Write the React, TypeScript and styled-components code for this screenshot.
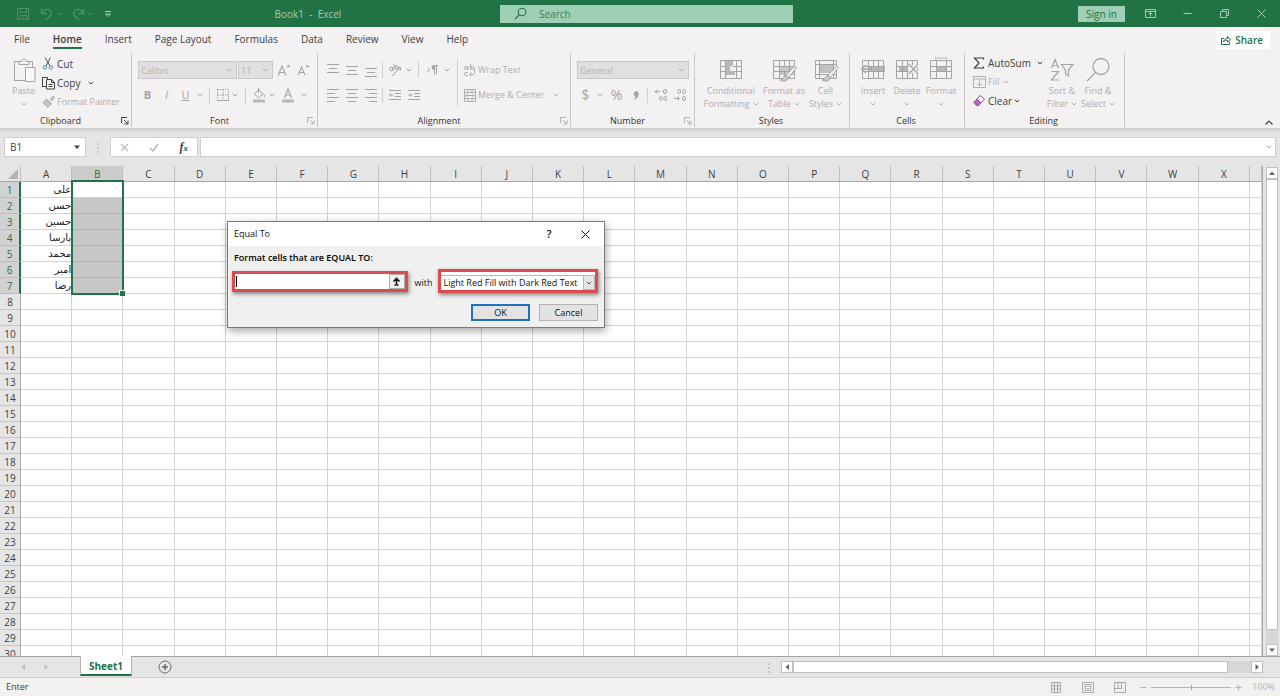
import React from "react";
import styled, { createGlobalStyle, css } from "styled-components";

const c = {
  green: "#217346",
  mint: "#9fcfb5",
  ribbon: "#f4f1f2",
  chrome: "#e6e5e6",
  line: "#d4d0d5",
  off: "#b0adae",
  iconOff: "#a6a3a5",
  ink: "#403e3f",
};

const Global = createGlobalStyle`
  * { box-sizing: border-box; }
  html, body { margin: 0; }
  body { font-family: "Open Sans", "Noto Sans", sans-serif; font-size: 9px; color: ${c.ink}; overflow: hidden; }
  button, input, select { font: inherit; color: inherit; margin: 0; }
  button { background: none; border: 0; padding: 0; }
  svg { display: block; flex: none; }
`;

/* ---------- shell ---------- */
const Window = styled.div`
  display: flex;
  flex-direction: column;
  height: 100vh;
  background: ${c.chrome};
`;

const TitleBar = styled.header`
  display: grid;
  grid-template-columns: 500fr 293fr 487fr;
  align-items: center;
  flex: none;
  height: 27px;
  background: ${c.green};
  color: ${c.mint};
`;
const TitleLeft = styled.div`
  display: flex;
  align-items: center;
  padding: 0 4px 0 16px;
`;
const QuickAccess = styled.div`
  display: flex;
  align-items: center;
  width: 104px;
`;
const QuickButton = styled.button<{ $w: number; $on?: boolean }>`
  display: flex;
  width: ${(p) => p.$w}px;
  color: ${(p) => (p.$on ? c.mint : "#4b9069")};
`;
const DocTitle = styled.div`
  flex: 1;
  text-align: center;
  font-size: 10px;
  line-height: 14px;
`;
const SearchBox = styled.label`
  display: flex;
  align-items: center;
  gap: 12px;
  height: 18px;
  padding-left: 14px;
  background: ${c.mint};
  color: ${c.green};
`;
const SearchInput = styled.input`
  flex: 1;
  min-width: 0;
  border: 0;
  padding: 0;
  outline: 0;
  background: transparent;
  font-size: 10px;
  &::placeholder { color: ${c.green}; opacity: 0.85; }
`;
const TitleRight = styled.div`
  display: flex;
  align-items: center;
  justify-content: flex-end;
  padding-right: 12px;
`;
const SignIn = styled.button`
  width: 47px;
  height: 16px;
  margin-right: 19px;
  background: ${c.mint};
  color: ${c.green};
  font-size: 10px;
  line-height: 16px;
`;
const WindowButton = styled.button<{ $gap?: number }>`
  display: flex;
  justify-content: center;
  width: 13px;
  margin-left: ${(p) => p.$gap ?? 0}px;
  color: ${c.mint};
`;

/* ---------- tabs ---------- */
const TabRow = styled.nav`
  display: flex;
  align-items: flex-start;
  flex: none;
  height: 26px;
  padding: 4px 10px 0 14px;
  gap: 23px;
  background: ${c.ribbon};
`;
const Tab = styled.a<{ $active?: boolean }>`
  height: 18px;
  color: ${c.ink};
  text-decoration: none;
  font-size: 10px;
  line-height: 17px;
  font-weight: ${(p) => (p.$active ? 600 : 400)};
  border-bottom: 2px solid ${(p) => (p.$active ? c.green : "transparent")};
`;
const ShareButton = styled.button`
  display: flex;
  align-items: center;
  gap: 4px;
  height: 18px;
  margin-left: auto;
  padding: 0 7px 0 5px;
  background: #fff;
  color: ${c.green};
  font-size: 10px;
  font-weight: 600;
`;

/* ---------- ribbon ---------- */
const Ribbon = styled.div`
  display: flex;
  flex: none;
  height: 75px;
  background: ${c.ribbon};
`;
const GroupBox = styled.section<{ $w: number }>`
  display: flex;
  flex-direction: column;
  flex: none;
  width: ${(p) => p.$w}px;
  height: 74px;
  border-right: 1px solid #c9c6c8;
`;
const GroupBody = styled.div<{ $pad: number }>`
  display: flex;
  flex: 1;
  padding-left: ${(p) => p.$pad}px;
`;
const GroupFooter = styled.div`
  display: flex;
  align-items: center;
  height: 12px;
  padding-right: 2px;
`;
const GroupName = styled.span`
  flex: 1;
  text-align: center;
  font-weight: 500;
  line-height: 12px;
  color: #333;
`;
const Launcher = styled.button<{ $on?: boolean }>`
  color: ${(p) => (p.$on ? c.ink : c.off)};
`;
const Stack = styled.div<{ $top?: number; $gap?: number }>`
  display: flex;
  flex-direction: column;
  gap: ${(p) => p.$gap ?? 0}px;
  padding-top: ${(p) => p.$top ?? 0}px;
`;
const Line = styled.div<{ $h: number }>`
  display: flex;
  align-items: center;
  height: ${(p) => p.$h}px;
`;
const Command = styled.button<{ $off?: boolean; $icon?: number; $h?: number }>`
  display: grid;
  grid-template-columns: ${(p) => p.$icon ?? 15}px auto auto;
  align-items: center;
  justify-content: start;
  height: ${(p) => p.$h ?? 19}px;
  font-size: ${(p) => (p.$off ? 9 : 10)}px;
  line-height: 14px;
  text-align: left;
  white-space: nowrap;
  color: ${(p) => (p.$off ? c.off : c.ink)};
`;
const ChevronSlot = styled.span<{ $gap: number }>`
  margin-left: ${(p) => p.$gap}px;
`;
const BigButton = styled.button<{ $w: number }>`
  display: flex;
  flex-direction: column;
  align-items: center;
  flex: none;
  width: ${(p) => p.$w}px;
  padding-top: 3px;
  color: ${c.off};
  line-height: 13px;
  white-space: nowrap;
`;
const BigIcon = styled.span`
  display: flex;
  align-items: center;
  justify-content: center;
  height: 27px;
  margin-bottom: 1px;
  color: ${c.iconOff};
`;
const BigLine = styled.span`
  display: flex;
  align-items: center;
  gap: 3px;
  height: 13px;
`;
const Tool = styled.button<{ $w: number }>`
  display: flex;
  align-items: center;
  justify-content: center;
  flex: none;
  width: ${(p) => p.$w}px;
  height: 18px;
  color: ${c.iconOff};
`;
const Rule = styled.span<{ $h?: number; $m?: number }>`
  flex: none;
  width: 1px;
  height: ${(p) => p.$h ?? 16}px;
  margin: 0 ${(p) => p.$m ?? 5}px;
  background: #cfcccd;
`;
const ComboWrap = styled.span<{ $w: number }>`
  display: grid;
  grid-template-columns: 1fr 10px;
  align-items: center;
  width: ${(p) => p.$w}px;
  height: 18px;
  margin-right: 1px;
  border: 1px solid #cbc8c9;
  background: #e1dfe0;
  color: ${c.off};
`;
const ComboSelect = styled.select`
  appearance: none;
  min-width: 0;
  height: 16px;
  padding: 0 0 0 2px;
  border: 0;
  background: transparent;
  opacity: 1;
  color: #b5b2b3;
`;
const Collapse = styled.button`
  display: flex;
  align-self: flex-end;
  margin: 0 7px 3px auto;
  color: ${c.ink};
`;

/* ---------- formula bar ---------- */
const FormulaBar = styled.div`
  display: flex;
  align-items: center;
  flex: none;
  height: 38px;
  padding: 0 4px 0 4px;
  background: linear-gradient(#cfcdce 0, #dedcdd 3px, ${c.chrome} 7px);
`;
const NameBox = styled.label`
  display: flex;
  align-items: center;
  width: 82px;
  height: 20px;
  padding: 0 5px;
  border: 1px solid #d0ced0;
  background: #fff;
  font-size: 10px;
`;
const NameInput = styled.input`
  flex: 1;
  min-width: 0;
  padding: 0;
  border: 0;
  outline: 0;
`;
const Dots = styled.span`
  width: 24px;
  display: flex;
  justify-content: center;
  color: #a8a6a7;
`;
const FxBox = styled.div`
  display: flex;
  align-items: center;
  justify-content: space-between;
  width: 88px;
  height: 20px;
  margin-right: 2px;
  padding: 0 9px;
  border: 1px solid #d0ced0;
  background: #fff;
`;
const FxButton = styled.button`
  color: #bab8b9;
`;
const FxText = styled.button`
  font-family: "Liberation Serif", serif;
  font-style: italic;
  font-weight: 700;
  font-size: 12px;
  line-height: 14px;
`;
const Sub = styled.span`
  font-size: 9px;
`;
const FormulaField = styled.label`
  display: flex;
  align-items: center;
  flex: 1;
  height: 20px;
  padding-right: 3px;
  border: 1px solid #d0ced0;
  background: #fff;
  color: #aaa;
`;

/* ---------- grid ---------- */
const SheetArea = styled.div`
  display: flex;
  flex: 1;
  min-height: 0;
`;
const SheetView = styled.div`
  flex: 1;
  min-width: 0;
  overflow: hidden;
  border-right: 1px solid #a9a6a8;
`;
const Grid = styled.table`
  width: 100%;
  table-layout: fixed;
  border-collapse: separate;
  border-spacing: 0;
  background: #fff;
`;
const headFont = css`
  font-weight: 400;
  font-size: 10px;
  line-height: 14px;
  text-align: center;
`;
const ColHead = styled.th<{ $sel?: boolean }>`
  ${headFont}
  height: 16px;
  padding: 0;
  border-right: 1px solid #bfbdbe;
  border-bottom: 1px solid ${(p) => (p.$sel ? c.green : "#a9a7a8")};
  background: ${(p) => (p.$sel ? "#cbcbcb" : c.chrome)};
  color: ${(p) => (p.$sel ? c.green : c.ink)};
`;
const CornerHead = styled.th`
  padding: 0 2px 2px 0;
  border-right: 1px solid #bfbdbe;
  border-bottom: 1px solid #a9a7a8;
  background: ${c.chrome};
  vertical-align: bottom;
  & > svg { margin-left: auto; }
`;
const RowHead = styled.th<{ $sel?: boolean }>`
  ${headFont}
  height: 16px;
  padding: 1px 0 0;
  border-right: ${(p) => (p.$sel ? `2px solid ${c.green}` : "1px solid #a9a7a8")};
  border-bottom: 1px solid ${(p) => (p.$sel ? "#bdbbbc" : "#c9c7c8")};
  background: ${(p) => (p.$sel ? "#d3d2d3" : c.chrome)};
  color: ${(p) => (p.$sel ? c.green : c.ink)};
`;
const Cell = styled.td<{ $shade?: boolean }>`
  position: relative;
  height: 16px;
  padding: 1px 1px 0 0;
  border-right: 1px solid ${c.line};
  border-bottom: 1px solid ${(p) => (p.$shade ? "#b0b2b1" : c.line)};
  background: ${(p) => (p.$shade ? "#c6c8c7" : "#fff")};
  font-family: "DejaVu Sans", sans-serif;
  font-size: 10px;
  line-height: 14px;
  text-align: right;
  white-space: nowrap;
  color: #222;
`;
const Selection = styled.div`
  position: absolute;
  z-index: 1;
  left: -1px;
  right: -2px;
  top: -2px;
  height: 115px;
  border: 2px solid ${c.green};
  &::after {
    content: "";
    position: absolute;
    right: -3px;
    bottom: -3px;
    width: 5px;
    height: 5px;
    border: solid #fff;
    border-width: 1px 0 0 1px;
    background: ${c.green};
  }
`;

const VScroll = styled.div`
  display: flex;
  flex-direction: column;
  width: 17px;
  padding: 1px 2px 0 3px;
`;
const scrollPart = css`
  display: flex;
  align-items: center;
  justify-content: center;
  border: 1px solid #c0bebf;
  background: #fff;
  color: #666;
`;
const VButton = styled.button`
  ${scrollPart}
  height: 12px;
`;
const VTrack = styled.div`
  flex: 1;
  background: #d8d7d8;
`;
const VThumb = styled.div`
  height: 97%;
  border: 1px solid #c0bebf;
  background: #fff;
`;

/* ---------- sheet tabs and status ---------- */
const SheetBar = styled.div`
  display: flex;
  flex: none;
  height: 22px;
  border-top: 1px solid #a3a1a2;
  border-bottom: 1px solid #d0ced0;
`;
const SheetNav = styled.div`
  display: flex;
  align-items: center;
  gap: 17px;
  width: 80px;
  padding-left: 20px;
  color: #bfbdbf;
`;
const SheetTab = styled.a`
  width: 52px;
  height: 20px;
  margin-top: -1px;
  border: 1px solid #b5b3b4;
  border-width: 0 1px;
  border-bottom: 2px solid ${c.green};
  background: #fff;
  color: ${c.green};
  font-size: 10px;
  font-weight: 700;
  line-height: 20px;
  text-align: center;
  text-decoration: none;
`;
const AddSheet = styled.button`
  margin-left: 26px;
  color: #6d6b6c;
`;
const HScroll = styled.div`
  display: flex;
  align-items: center;
  flex: 0 0 523px;
  margin-left: auto;
  padding-right: 17px;
  color: #a8a6a7;
`;
const HButton = styled.button`
  ${scrollPart}
  width: 12px;
  height: 12px;
`;
const HTrack = styled.div`
  flex: 1;
  height: 12px;
  background: #d8d7d8;
`;
const HThumb = styled.div`
  width: 95%;
  height: 12px;
  border: 1px solid #c0bebf;
  background: #fff;
`;
const StatusBar = styled.footer`
  display: flex;
  align-items: center;
  flex: none;
  height: 18px;
  padding: 0 5px 0 6px;
  background: #f2f1f0;
  line-height: 14px;
`;
const ViewButtons = styled.div`
  display: flex;
  gap: 20px;
  margin-left: auto;
  color: #a9a7a8;
`;
const ZoomBox = styled.div`
  display: flex;
  align-items: center;
  gap: 4px;
  margin-left: 14px;
  color: #b3b1b2;
`;
const ZoomRange = styled.input`
  appearance: none;
  width: 80px;
  height: 8px;
  background: linear-gradient(#b9b7b8, #b9b7b8) center / 100% 1px no-repeat;
  &::-webkit-slider-thumb {
    appearance: none;
    width: 1px;
    height: 5px;
    background: #a5a3a4;
  }
`;
const ZoomText = styled.span`
  margin-left: 6px;
`;

/* ---------- dialog ---------- */
const Dialog = styled.section`
  position: absolute;
  z-index: 5;
  left: 227px;
  top: 221px;
  width: 378px;
  border: 1px solid #7c7a7b;
  background: #f0f0f0;
  box-shadow: 1px 3px 8px rgba(0, 0, 0, 0.35);
  color: #111;
`;
const DialogTitle = styled.header`
  display: flex;
  align-items: center;
  height: 24px;
  padding: 0 14px 0 6px;
  background: #fff;
  line-height: 14px;
`;
const DialogName = styled.span`
  flex: 1;
`;
const HelpButton = styled.button`
  width: 12px;
  margin-right: 26px;
  font-size: 11px;
  font-weight: 600;
`;
const DialogBody = styled.form`
  padding: 5px 6px 6px 4px;
`;
const Prompt = styled.label`
  display: block;
  padding-left: 2px;
  font-weight: 600;
  line-height: 14px;
  color: #000;
`;
const Fields = styled.div`
  display: flex;
  align-items: center;
  margin-top: 4px;
`;
const marked = css`
  display: flex;
  border: 3px solid #dd4a50;
  box-shadow: 1px 2px 4px rgba(0, 0, 0, 0.45);
`;
const RefBox = styled.span`
  ${marked}
  position: relative;
  width: 176px;
  height: 21px;
`;
const RefInput = styled.input`
  flex: 1;
  min-width: 0;
  padding: 0 4px;
  border: 0;
  outline: 0;
  background: #fff;
`;
const Caret = styled.i`
  position: absolute;
  left: 1px;
  top: 2px;
  width: 1px;
  height: 11px;
  background: #000;
`;
const PickButton = styled.button`
  display: flex;
  align-items: center;
  justify-content: center;
  width: 16px;
  border: 1px solid #b0aeaf;
  background: #f0f0f0;
`;
const WithText = styled.label`
  width: 31px;
  padding: 3px 0 0 1px;
  text-align: center;
  line-height: 14px;
`;
const SelectBox = styled.span`
  ${marked}
  width: 160px;
  height: 24px;
  align-items: stretch;
  background: #fff;
  padding: 3px 0 0;
`;
const StyleSelect = styled.select`
  appearance: none;
  flex: 1;
  min-width: 0;
  padding: 0 0 2px 2px;
  border: 0;
  border-top: 1px solid #b9b7b8;
  background: #fff;
  white-space: nowrap;
`;
const SelectArrow = styled.span`
  display: flex;
  align-items: center;
  justify-content: center;
  width: 12px;
  border: 1px solid #b9b7b8;
  background: #e5e5e5;
  color: #555;
`;
const Actions = styled.div`
  display: flex;
  justify-content: flex-end;
  gap: 9px;
  margin-top: 11px;
`;
const ActionButton = styled.button<{ $primary?: boolean }>`
  width: 59px;
  height: 17px;
  border: ${(p) => (p.$primary ? "2px solid #1f73bd" : "1px solid #b3b1b2")};
  background: #e2e2e2;
  line-height: 13px;
`;

/* ---------- icons ---------- */
type IcoProps = { w: number; h: number; sw?: number; children: React.ReactNode };
const Ico = ({ w, h, sw = 1, children }: IcoProps) => (
  <svg width={w} height={h} viewBox={`0 0 ${w} ${h}`} fill="none" stroke="currentColor" strokeWidth={sw} aria-hidden="true">
    {children}
  </svg>
);
const Chev = () => (
  <Ico w={6} h={4}><path d="M.7 .8 3 3 5.300 .8" /></Ico>
);
const Tri = ({ d }: { d: "up" | "down" | "left" | "right" }) => {
  const paths = { up: "M0 5 3 1.500 6 5z", down: "M0 1.500 3 5 6 1.500z", left: "M5 0 1.500 3 5 6z", right: "M1.500 0 5 3 1.500 6z" };
  return <svg width="6" height="6" viewBox="0 0 6 6" fill="currentColor" aria-hidden="true"><path d={paths[d]} /></svg>;
};
const Lines = ({ rows }: { rows: [number, number, number][] }) => (
  <Ico w={14} h={14}>{rows.map(([y, a, b]) => <path key={y} d={`M${a} ${y}.5H${b}`} />)}</Ico>
);
const LauncherIcon = () => (
  <Ico w={8} h={8}><path d="M.5 6V.5H6M3 3l3.500 3.500M7 3.500V7H3.500" /></Ico>
);
const TableIcon = ({ kind }: { kind: "cond" | "table" | "cell" | "insert" | "delete" | "format" }) => (
  <Ico w={26} h={26}>
    {kind === "cond" && <path d="M7 4h8v5H7zM7 9h5v5H7zM7 14h10v4H7z" fill="#b9b6b8" stroke="none" />}
    {kind === "table" && <path d="M9 9h14v9H9z" fill="#c9c6c8" stroke="none" />}
    {kind === "cell" && <path d="M6 8h14v8H6z" fill="#c3c0c2" stroke="none" />}
    {kind === "insert" && <path d="M8 9h17v6H8z" fill="#b8b5b7" stroke="none" />}
    {kind === "delete" && <path d="M5 9h9v6H5z" fill="#b8b5b7" stroke="none" />}
    {kind === "format" && <path d="M8 9h10v6H8z" fill="#b8b5b7" stroke="none" />}
    {kind === "cond" && <path d="M2.500 3.500h21v18h-21zM2.500 9.500h4.500M2.500 14.500h4.500M15 9.500h8.500M17 14.500h6.500M7.500 3.500v18M18.500 3.500v18" />}
    {kind === "cell" && <path d="M2.500 3.500h21v18h-21zM2.500 7.500h21M2.500 17.500h21M6.500 3.500v18M20.500 3.500v18" />}
    {kind !== "cell" && kind !== "cond" && <path d="M2.500 3.500h21v18h-21zM2.500 9.500h21M2.500 14.500h21M8.500 3.500v18M18.500 3.500v18" />}
    {(kind === "table" || kind === "insert" || kind === "delete") && <path d="M13.500 3.500v6M13.500 14.500v7" />}
    {(kind === "table" || kind === "cell") && (
      <>
        <path d="M23.500 9 25.500 10.500l-8 10-2.500-2z" fill={c.ribbon} />
        <path d="M15 18.500c-3 0-2.500 4-6 4.500 3 2 8 1.500 8.500-2.500z" fill="#c9c6c8" />
      </>
    )}
    {kind === "insert" && (
      <>
        <path d="M1 10h7v4H1z" fill={c.ribbon} stroke="none" />
        <path d="M12 12H1.500M6 8l-4.500 4L6 16" strokeWidth="1.300" />
      </>
    )}
    {kind === "delete" && (
      <>
        <path d="m15 7 9 10M24 7l-9 10" strokeWidth="3.500" stroke={c.ribbon} />
        <path d="m15 7 9 10M24 7l-9 10" strokeWidth="1.300" />
      </>
    )}
    {kind === "format" && <path d="M7.500 1h11M7.500 0v2.500M18.500 0v2.500" stroke="#bbb8ba" />}
  </Ico>
);

const Icon = {
  save: <Ico w={14} h={14}><path d="M1.500 1.500h11v11h-11zM4 1.500v4h6.500v-4M4 12.500v-4h6.500v4M6 10.500h2" /></Ico>,
  undo: <Ico w={14} h={14} sw={1.3}><path d="M1.500 1.500v5h5M2 6c2-3.500 6-4.500 8-2.500s2 4-.5 6L6 13" /></Ico>,
  redo: <Ico w={14} h={14} sw={1.3}><path d="M12.500 1.500v5h-5M12 6c-2-3.500-6-4.500-8-2.500s-2 4 .5 6L8 13" /></Ico>,
  custom: <Ico w={8} h={8}><path d="M1 1.500h6M1.500 4 4 6.500 6.500 4z" /></Ico>,
  search: <Ico w={13} h={13} sw={1.100}><circle cx="8" cy="5" r="3.800" /><path d="M5.300 7.700 1 12" /></Ico>,
  ribbonOpts: <Ico w={11} h={9}><path d="M.5.5h10v8H.5zM.5 2.500h10M5.500 7.500v-4M3.500 5.500l2-2 2 2" /></Ico>,
  min: <Ico w={9} h={9}><path d="M.5 4.500h8" /></Ico>,
  restore: <Ico w={9} h={9}><path d="M.5 2.500h6v6h-6zM2.500 2.500v-2h6v6h-2" /></Ico>,
  close: <Ico w={9} h={9}><path d="m.5.5 8 8M8.500.5l-8 8" /></Ico>,
  share: <Ico w={10} h={10}><path d="M3 3.500H.5v6h8V7M2.500 7c.5-2.500 2-3.500 4-3.500V1.500L9.500 4.500l-3 2.500V5.300C5 5.300 3.500 5.500 2.500 7z" /></Ico>,
  paste: <Ico w={24} h={26}><path d="M7 4.500H2.500v19H13M17 4.500h3.500v6" /><path d="M7 7.500v-3h2.500c0-3 5-3 5 0H17v3z" /><path d="M13.500 10.500h9.500v14h-9.500z" fill="#faf8f9" /></Ico>,
  cut: <Ico w={12} h={13}><path d="M3 .5 8 9M8.500.5 4 9" stroke="#555" /><circle cx="3" cy="10.500" r="1.700" stroke="#3d8bc4" /><circle cx="8.800" cy="10.500" r="1.700" stroke="#3d8bc4" /></Ico>,
  copy: <Ico w={14} h={14}><path d="M4 10.500H.5v-9h5v2" /><path d="M4.500 3.500h5l3 3v6.500h-8zM9.500 3.500v3h3M6.500 8.500h4M6.500 10.500h4" /></Ico>,
  painter: <Ico w={13} h={13}><path d="M8.500 4.500 11 1l1.500 1.500-3 3.500zM3.500 4l6 5.500M2 6.500 .8 7.500l5 5 3.500-4-4.500-4z" fill="#c6c3c5" /></Ico>,
  borders: <Ico w={14} h={14}><path d="M1.500 1.500h11v11h-11zM7 1.500v11M1.500 7h11" strokeDasharray="1.500 1" /><path d="M1 12.500h12" /></Ico>,
  fill: <Ico w={14} h={15}><path d="m6.500 1.500 4.500 4.500-4.500 4-4-4zM6.500 0v5M11.500 6c1.500 2 1 3 .5 3.500" /><path d="M1 13h12" strokeWidth="3" stroke="#b9b6b8" /></Ico>,
  fontColor: <Ico w={14} h={15}><path d="M3.500 10 7 1l3.500 9M4.500 7h5" strokeWidth="1.200" /><path d="M1 13h12" strokeWidth="3" stroke="#b9b6b8" /></Ico>,
  grow: <Ico w={14} h={14} sw={1.100}><path d="M1 12.500 5 3l4 9.500M2.500 9.500h5M10 4l1.500-1.500L13 4" /></Ico>,
  shrink: <Ico w={14} h={14} sw={1.100}><path d="M2 12 5.500 4 9 12M3.300 9.500h4.400M10 2.500 11.500 4 13 2.500" /></Ico>,
  orient: <Ico w={14} h={14}><circle cx="3.500" cy="6" r="1.800" /><path d="M5 4v4M5.500 1l3.500 6" /><circle cx="8.500" cy="4.500" r="1.800" /><path d="m4 13 8.500-8.500M9.500 4.500h3v3" /></Ico>,
  rtl: <Ico w={14} h={12}><path d="m1.500 4 2 2-2 2M8.500 10.500v-9M10.500 10.500v-9M12 1.500H7.500" /><path d="M8 1.500a2 2 0 0 0 0 4z" fill="currentColor" /></Ico>,
  outdent: <Ico w={14} h={12}><path d="M1 1.500h12M7 4.500h6M7 7.500h6M1 10.500h12M5.500 6h-4M3 4.500 1.500 6 3 7.500" /></Ico>,
  indent: <Ico w={14} h={12}><path d="M1 1.500h12M7 4.500h6M7 7.500h6M1 10.500h12M1 6h4M3.500 4.500 5 6 3.500 7.500" /></Ico>,
  comma: <Ico w={7} h={9}><path d="M1 2.800a2.200 2.200 0 1 1 3.800 1.500C4.800 6 3.600 7.500 1.600 8c1-.9 1.500-1.800 1.500-3C1.800 5 1 4 1 2.800z" fill="currentColor" /></Ico>,
  wrap: <Ico w={13} h={13}><circle cx="3" cy="4" r="1.500" /><path d="M5 2v4M7.500 0v6" /><circle cx="9.300" cy="4" r="1.500" /><path d="M5 8.500H3a1.500 1.500 0 0 0 0 3h2M11.500 4v5c0 1-.5 1.500-1.500 1.500H7M8.500 8.500l-2 2 2 2" /></Ico>,
  merge: <Ico w={14} h={13}><path d="M1.500.5h11v12h-11zM1.500 3.500h11M1.500 9.500h11M5 .5v3M9 .5v3M5 9.500v3M9 9.500v3M3 6.500h8M4.500 5 3 6.500 4.500 8M9.500 5 11 6.500 9.500 8" /></Ico>,
  sum: <Ico w={12} h={12} sw={1.200}><path d="M10.500 2.500V1H1.500l4.500 5-4.500 5h9V9.500" /></Ico>,
  fillDown: <Ico w={14} h={12}><path d="M.5.5h12v11H.5zM.5 3h12M6.500 4.500V10M4 7.500l2.500 2.500L9 7.500" /></Ico>,
  eraser: <Ico w={13} h={13}><path d="M7 1.500 11.500 5l-6 6.500H3.500l-2.500-3z" stroke="#8f4a9d" fill="#fff" /><path d="M4 5 8 9l-2.500 2.500h-2l-2.500-3z" fill="#b765c4" stroke="#a04fb0" /></Ico>,
  sort: <Ico w={24} h={24} sw={1.200}><path d="M1.500 10 5 1.500 8.500 10M2.500 7.500h5M1.500 13.500h7l-7 8.500h7.500M11.500 6.500h11.500l-4.500 5.500v6l-3-2v-4z" /></Ico>,
  find: <Ico w={26} h={26} sw={1.300}><circle cx="16" cy="9.500" r="8" /><path d="M10.500 15.500 2 24" /></Ico>,
  dots: <Ico w={2} h={11}><path d="M1 1v2M1 5v2M1 9v2" /></Ico>,
  x: <Ico w={9} h={9} sw={1.200}><path d="m1 1 7 7M8 1 1 8" /></Ico>,
  check: <Ico w={10} h={9} sw={1.500}><path d="m1 5 3 3 5-7" /></Ico>,
  corner: <svg width="10" height="10" viewBox="0 0 10 10" aria-hidden="true"><path d="M10 0v10H0z" fill="#b5b3b4" /></svg>,
  plus: <Ico w={14} h={14}><circle cx="7" cy="7" r="6" /><path d="M7 4v6M4 7h6" strokeWidth="1.500" /></Ico>,
  viewGrid: <Ico w={12} h={11}><path d="M1.500.5h9v10h-9zM1.500 4h9M1.500 7h9M4.500.5v10M7.500.5v10" /></Ico>,
  viewPage: <Ico w={12} h={11}><path d="M.5.5h11v10H.5zM3 2.500h6v6H3zM4.500 4.500h3M4.500 6.500h3" /></Ico>,
  viewBreak: <Ico w={12} h={11}><path d="M.5.5h11v10H.5zM.5 6.500h7v-6M4 .5v6" /></Ico>,
  pick: <Ico w={9} h={9} sw={1.600}><path d="M4.500 7V1.500M1.500 4.500l3-3 3 3M2.500 8h4" /></Ico>,
  minus: <Ico w={7} h={7}><path d="M.5 3.500h6" /></Ico>,
  add: <Ico w={7} h={7}><path d="M.5 3.500h6M3.500.5v6" /></Ico>,
  inc: <Ico w={14} h={14}><path d="M6 3.500H1M3 1.500l-2 2 2 2" /><rect x="9.500" y="1.500" width="3" height="4" rx="1.500" /><rect x="5.500" y="8.500" width="2.500" height="4" rx="1.200" /><rect x="10" y="8.500" width="2.500" height="4" rx="1.200" /></Ico>,
  dec: <Ico w={14} h={14}><path d="M1 10.500h5M4.500 8.500l2 2-2 2" /><rect x="9.500" y="8.500" width="3" height="4" rx="1.500" /><rect x="5" y="1.500" width="2.500" height="4" rx="1.200" /><rect x="9.800" y="1.500" width="2.700" height="4" rx="1.200" /></Ico>,
};

/* ---------- pieces ---------- */
const Glyph = styled.span<{ $bold?: boolean; $italic?: boolean; $under?: boolean; $size?: number }>`
  font-size: ${(p) => p.$size ?? 11}px;
  line-height: 14px;
  font-weight: ${(p) => (p.$bold ? 700 : 400)};
  font-style: ${(p) => (p.$italic ? "italic" : "normal")};
  text-decoration: ${(p) => (p.$under ? "underline" : "none")};
`;

type GroupProps = { name: string; w: number; pad: number; launcher?: "on" | "off"; children: React.ReactNode };
const Group = ({ name, w, pad, launcher, children }: GroupProps) => (
  <GroupBox $w={w} aria-label={name}>
    <GroupBody $pad={pad}>{children}</GroupBody>
    <GroupFooter>
      <GroupName>{name}</GroupName>
      {launcher && <Launcher $on={launcher === "on"} aria-label={`${name} settings`}><LauncherIcon /></Launcher>}
    </GroupFooter>
  </GroupBox>
);

const Combo = ({ label, value, w }: { label: string; value: string; w: number }) => (
  <ComboWrap $w={w}>
    <ComboSelect aria-label={label} disabled><option>{value}</option></ComboSelect>
    <Chev />
  </ComboWrap>
);

type BigProps = { w: number; icon: React.ReactNode; first: string; second?: string };
const Big = ({ w, icon, first, second }: BigProps) => (
  <BigButton $w={w} disabled>
    <BigIcon>{icon}</BigIcon>
    <BigLine>{first}</BigLine>
    <BigLine>{second}<Chev /></BigLine>
  </BigButton>
);

const T = ({ w, label, children }: { w: number; label: string; children: React.ReactNode }) => (
  <Tool $w={w} disabled aria-label={label}>{children}</Tool>
);

const tabs = ["File", "Home", "Insert", "Page Layout", "Formulas", "Data", "Review", "View", "Help"];
const columns = "ABCDEFGHIJKLMNOPQRSTUVWX".split("");
const names = ["علی", "حسن", "حسین", "پارسا", "محمد", "امیر", "رضا"];
const rowNumbers = Array.from({ length: 30 }, (_, i) => i + 1);

export default function App() {
  return (
    <Window>
      <Global />
      <TitleBar>
        <TitleLeft>
          <QuickAccess>
            <QuickButton $w={24} aria-label="Save">{Icon.save}</QuickButton>
            <QuickButton $w={16} aria-label="Undo">{Icon.undo}</QuickButton>
            <QuickButton $w={15} aria-label="Undo list"><Chev /></QuickButton>
            <QuickButton $w={16} aria-label="Redo">{Icon.redo}</QuickButton>
            <QuickButton $w={17} aria-label="Redo list"><Chev /></QuickButton>
            <QuickButton $w={8} $on aria-label="Customize toolbar">{Icon.custom}</QuickButton>
          </QuickAccess>
          <DocTitle>Book1&nbsp; -&nbsp; Excel</DocTitle>
        </TitleLeft>
        <SearchBox>
          {Icon.search}
          <SearchInput aria-label="Search" placeholder="Search" />
        </SearchBox>
        <TitleRight>
          <SignIn>Sign in</SignIn>
          <WindowButton aria-label="Ribbon display">{Icon.ribbonOpts}</WindowButton>
          <WindowButton $gap={24} aria-label="Minimize">{Icon.min}</WindowButton>
          <WindowButton $gap={24} aria-label="Restore">{Icon.restore}</WindowButton>
          <WindowButton $gap={24} aria-label="Close">{Icon.close}</WindowButton>
        </TitleRight>
      </TitleBar>

      <TabRow>
        {tabs.map((t) => <Tab key={t} href={`#${t}`} $active={t === "Home"}>{t}</Tab>)}
        <ShareButton>{Icon.share}Share</ShareButton>
      </TabRow>

      <Ribbon>
        <Group name="Clipboard" w={132} pad={5} launcher="on">
          <Big w={37} icon={Icon.paste} first="Paste" />
          <Stack $top={1}>
            <Command $h={19}>{Icon.cut}<span>Cut</span></Command>
            <Command $h={19}>{Icon.copy}<span>Copy</span><ChevronSlot $gap={8}><Chev /></ChevronSlot></Command>
            <Command $h={19} $off disabled>{Icon.painter}<span>Format Painter</span></Command>
          </Stack>
        </Group>

        <Group name="Font" w={186} pad={6} launcher="off">
          <Stack $top={8} $gap={7}>
            <Line $h={18}>
              <Combo label="Font" value="Calibri" w={99} />
              <Combo label="Font size" value="11" w={35} />
              <T w={20} label="Increase font size">{Icon.grow}</T>
              <T w={18} label="Decrease font size">{Icon.shrink}</T>
            </Line>
            <Line $h={18}>
              <T w={19} label="Bold"><Glyph $bold>B</Glyph></T>
              <T w={19} label="Italic"><Glyph $italic>I</Glyph></T>
              <T w={19} label="Underline"><Glyph $under>U</Glyph></T>
              <T w={9} label="Underline styles"><Chev /></T>
              <Rule />
              <T w={15} label="Borders">{Icon.borders}</T>
              <T w={10} label="Border styles"><Chev /></T>
              <Rule />
              <T w={16} label="Fill color">{Icon.fill}</T>
              <T w={10} label="Fill colors"><Chev /></T>
              <T w={22} label="Font color">{Icon.fontColor}</T>
              <T w={10} label="Font colors"><Chev /></T>
            </Line>
          </Stack>
        </Group>

        <Group name="Alignment" w={253} pad={5} launcher="off">
          <Stack $top={8} $gap={7}>
            <Line $h={18}>
              <T w={19} label="Top align"><Lines rows={[[1, 1, 13], [5, 3, 11], [9, 1, 13]]} /></T>
              <T w={19} label="Middle align"><Lines rows={[[3, 1, 13], [7, 3, 11], [11, 1, 13]]} /></T>
              <T w={19} label="Bottom align"><Lines rows={[[5, 1, 13], [9, 3, 11], [13, 1, 13]]} /></T>
              <Rule $m={2} />
              <T w={19} label="Orientation">{Icon.orient}</T>
              <T w={9} label="Orientations"><Chev /></T>
              <Rule $m={5} />
              <T w={18} label="Text direction">{Icon.rtl}</T>
              <T w={10} label="Text directions"><Chev /></T>
            </Line>
            <Line $h={18}>
              <T w={19} label="Align left"><Lines rows={[[1, 1, 13], [5, 1, 9], [9, 1, 13], [13, 1, 9]]} /></T>
              <T w={19} label="Center"><Lines rows={[[1, 1, 13], [5, 3, 11], [9, 1, 13], [13, 3, 11]]} /></T>
              <T w={19} label="Align right"><Lines rows={[[1, 1, 13], [5, 5, 13], [9, 1, 13], [13, 5, 13]]} /></T>
              <Rule $m={2} />
              <T w={19} label="Decrease indent">{Icon.outdent}</T>
              <T w={19} label="Increase indent">{Icon.indent}</T>
            </Line>
          </Stack>
          <Line $h={58}><Rule $h={48} /></Line>
          <Stack $top={8} $gap={7}>
            <Command $h={18} $off disabled>{Icon.wrap}<span>Wrap Text</span></Command>
            <Command $h={18} $off disabled>{Icon.merge}<span>Merge &amp; Center</span><ChevronSlot $gap={9}><Chev /></ChevronSlot></Command>
          </Stack>
        </Group>

        <Group name="Number" w={124} pad={6} launcher="off">
          <Stack $top={8} $gap={7}>
            <Line $h={18}><Combo label="Number format" value="General" w={112} /></Line>
            <Line $h={18}>
              <T w={17} label="Currency"><Glyph $size={14}>$</Glyph></T>
              <T w={11} label="Currencies"><Chev /></T>
              <T w={23} label="Percent"><Glyph $size={14}>%</Glyph></T>
              <T w={16} label="Comma style">{Icon.comma}</T>
              <Rule $m={3} />
              <T w={19} label="Increase decimal">{Icon.inc}</T>
              <T w={19} label="Decrease decimal">{Icon.dec}</T>
            </Line>
          </Stack>
        </Group>

        <Group name="Styles" w={155} pad={6}>
          <Big w={60} icon={<TableIcon kind="cond" />} first="Conditional" second="Formatting" />
          <Big w={46} icon={<TableIcon kind="table" />} first="Format as" second="Table" />
          <Big w={37} icon={<TableIcon kind="cell" />} first="Cell" second="Styles" />
        </Group>

        <Group name="Cells" w={115} pad={6}>
          <Big w={34} icon={<TableIcon kind="insert" />} first="Insert" />
          <Big w={34} icon={<TableIcon kind="delete" />} first="Delete" />
          <Big w={34} icon={<TableIcon kind="format" />} first="Format" />
        </Group>

        <Group name="Editing" w={160} pad={8}>
          <Stack>
            <Command $icon={15}>{Icon.sum}<span>AutoSum</span><ChevronSlot $gap={6}><Chev /></ChevronSlot></Command>
            <Command $icon={15} $off disabled>{Icon.fillDown}<span>Fill</span><ChevronSlot $gap={4}><Chev /></ChevronSlot></Command>
            <Command $icon={15}>{Icon.eraser}<span>Clear</span><ChevronSlot $gap={2}><Chev /></ChevronSlot></Command>
          </Stack>
          <Big w={38} icon={Icon.sort} first="Sort &" second="Filter" />
          <Big w={34} icon={Icon.find} first="Find &" second="Select" />
        </Group>
        <Collapse aria-label="Collapse ribbon"><Ico w={8} h={5} sw={1.200}><path d="M.5 4.500 4 1l3.500 3.500" /></Ico></Collapse>
      </Ribbon>

      <FormulaBar>
        <NameBox>
          <NameInput aria-label="Name box" defaultValue="B1" />
          <Tri d="down" />
        </NameBox>
        <Dots>{Icon.dots}</Dots>
        <FxBox>
          <FxButton aria-label="Cancel entry">{Icon.x}</FxButton>
          <FxButton aria-label="Accept entry">{Icon.check}</FxButton>
          <FxText aria-label="Insert function">f<Sub>x</Sub></FxText>
        </FxBox>
        <FormulaField>
          <NameInput aria-label="Formula" />
          <Chev />
        </FormulaField>
      </FormulaBar>

      <SheetArea>
        <SheetView>
          <Grid>
            <colgroup>
              <col width="21" />
              {columns.map((k) => <col key={k} />)}
              <col width="12" />
            </colgroup>
            <thead>
              <tr>
                <CornerHead aria-label="Select all">{Icon.corner}</CornerHead>
                {columns.map((k) => <ColHead key={k} scope="col" $sel={k === "B"}>{k}</ColHead>)}
                <ColHead />
              </tr>
            </thead>
            <tbody>
              {rowNumbers.map((n) => (
                <tr key={n}>
                  <RowHead scope="row" $sel={n <= 7}>{n}</RowHead>
                  {columns.map((k) => (
                    <Cell key={k} $shade={k === "B" && n > 1 && n <= 7} dir={k === "A" ? "auto" : undefined}>
                      {k === "A" && names[n - 1]}
                      {k === "B" && n === 1 && <Selection />}
                    </Cell>
                  ))}
                  <Cell />
                </tr>
              ))}
            </tbody>
          </Grid>
        </SheetView>
        <VScroll>
          <VButton aria-label="Scroll up"><Tri d="up" /></VButton>
          <VTrack><VThumb /></VTrack>
          <VButton aria-label="Scroll down"><Tri d="down" /></VButton>
        </VScroll>
      </SheetArea>

      <SheetBar>
        <SheetNav><Tri d="left" /><Tri d="right" /></SheetNav>
        <SheetTab href="#Sheet1">Sheet1</SheetTab>
        <AddSheet aria-label="New sheet">{Icon.plus}</AddSheet>
        <HScroll>
          <Dots>{Icon.dots}</Dots>
          <HButton aria-label="Scroll left"><Tri d="left" /></HButton>
          <HTrack><HThumb /></HTrack>
          <HButton aria-label="Scroll right"><Tri d="right" /></HButton>
        </HScroll>
      </SheetBar>

      <StatusBar>
        <span>Enter</span>
        <ViewButtons>
          <button aria-label="Normal view">{Icon.viewGrid}</button>
          <button aria-label="Page layout view">{Icon.viewPage}</button>
          <button aria-label="Page break view">{Icon.viewBreak}</button>
        </ViewButtons>
        <ZoomBox>
          {Icon.minus}
          <ZoomRange type="range" aria-label="Zoom" defaultValue={50} />
          {Icon.add}
          <ZoomText>100%</ZoomText>
        </ZoomBox>
      </StatusBar>

      <Dialog role="dialog" aria-label="Equal To">
        <DialogTitle>
          <DialogName>Equal To</DialogName>
          <HelpButton aria-label="Help">?</HelpButton>
          <button aria-label="Close dialog">{Icon.close}</button>
        </DialogTitle>
        <DialogBody>
          <Prompt htmlFor="ref">Format cells that are EQUAL TO:</Prompt>
          <Fields>
            <RefBox>
              <RefInput id="ref" />
              <Caret />
              <PickButton type="button" aria-label="Pick range">{Icon.pick}</PickButton>
            </RefBox>
            <WithText htmlFor="fmt">with</WithText>
            <SelectBox>
              <StyleSelect id="fmt"><option>Light Red Fill with Dark Red Text</option></StyleSelect>
              <SelectArrow><Chev /></SelectArrow>
            </SelectBox>
          </Fields>
          <Actions>
            <ActionButton type="button" $primary>OK</ActionButton>
            <ActionButton type="button">Cancel</ActionButton>
          </Actions>
        </DialogBody>
      </Dialog>
    </Window>
  );
}
